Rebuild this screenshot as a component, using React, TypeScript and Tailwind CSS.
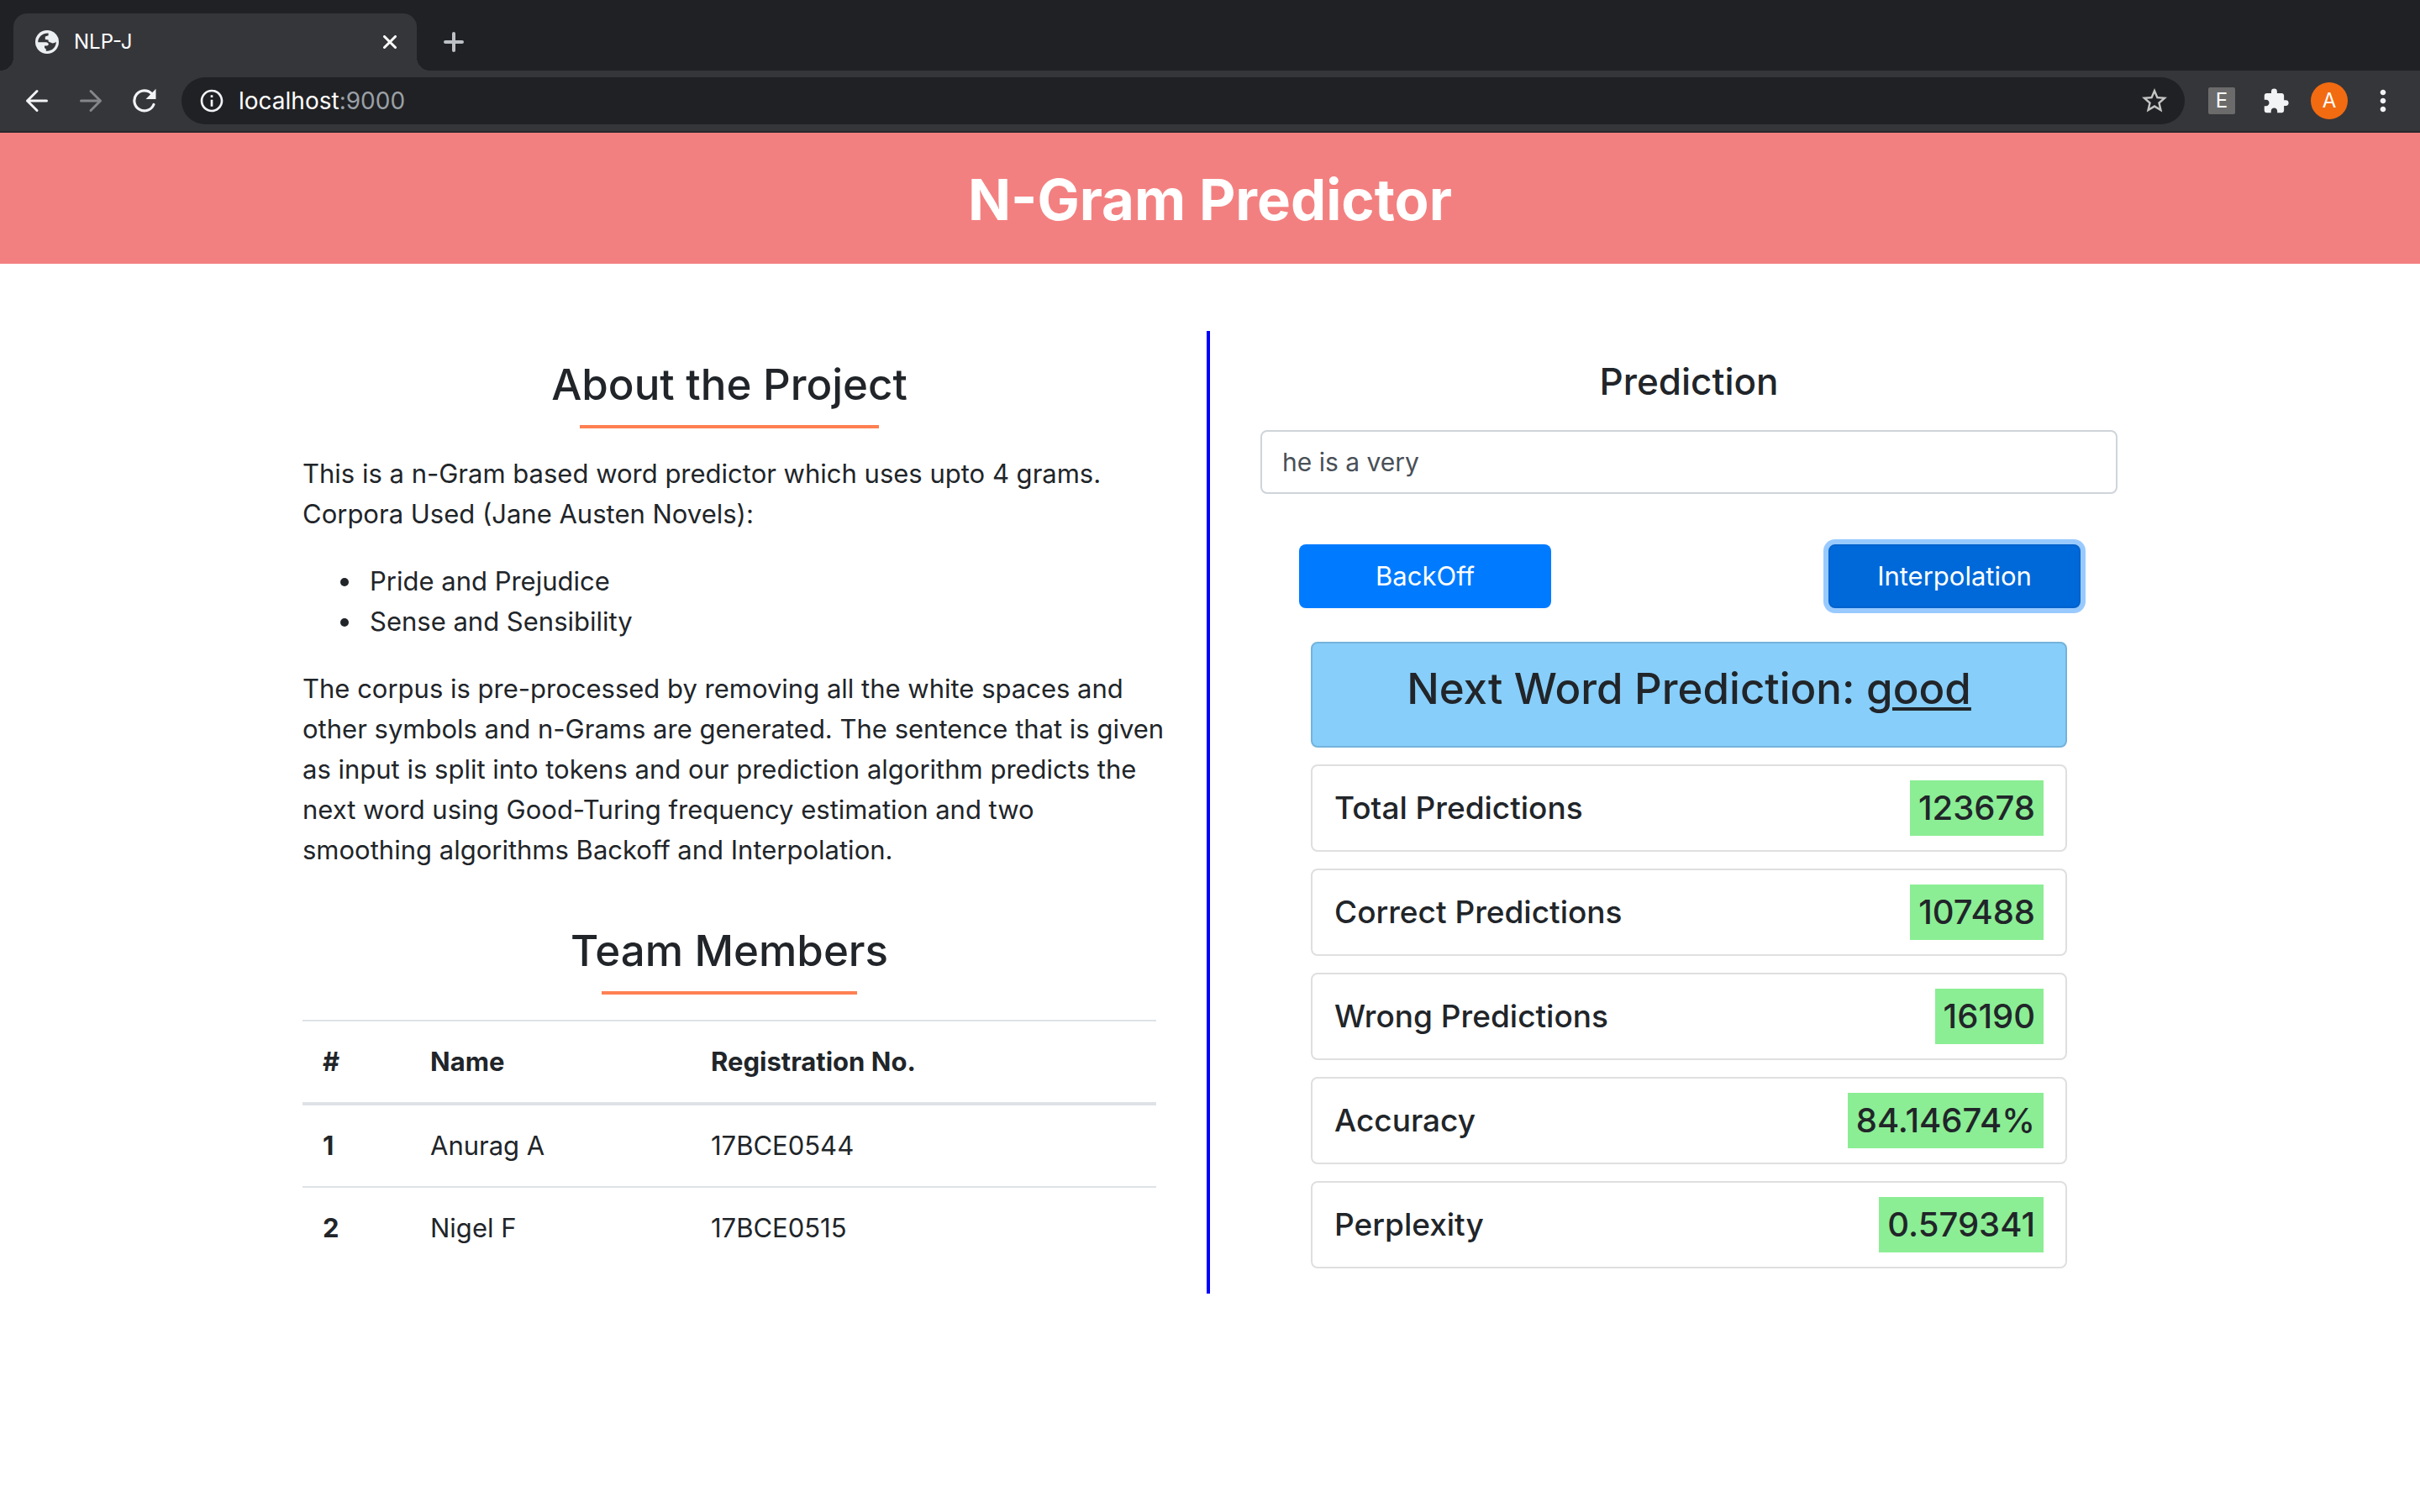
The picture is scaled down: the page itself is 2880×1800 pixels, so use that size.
import { MdExtension, MdInfoOutline, MdMoreVert, MdStarBorder } from 'react-icons/md';

function GlobeIcon() {
  return (
    <svg viewBox="0 0 28 28" className="size-7" aria-hidden="true">
      <circle cx="14" cy="14" r="14" fill="#eceff1" />
      <path
        d="M3.2 14.2C3.2 7.8 8.9 3.1 15.6 3.4V6.2L11.8 7.6V11L15.6 11.4V13.4L18.6 14.8C20.8 16 22.6 15.4 24.8 13.8C24.9 20.4 19.6 25.2 12.8 24.7V22.4L11 21V18.4H13.6C15 18.4 15.8 17.8 15.8 16.6C15.8 15.2 14.4 14.4 12.6 14.2Z"
        fill="#35363a"
      />
    </svg>
  );
}

function ArrowIcon({ flipped = false }: { flipped?: boolean }) {
  return (
    <svg
      viewBox="0 0 28 28"
      className="size-7"
      fill="none"
      stroke="currentColor"
      strokeWidth="3"
      strokeLinecap="round"
      strokeLinejoin="round"
      aria-hidden="true"
    >
      {flipped ? <path d="M2.5 14H25.5M14 2.5L25.5 14L14 25.5" /> : <path d="M25.5 14H2.5M14 2.5L2.5 14L14 25.5" />}
    </svg>
  );
}

function ReloadIcon() {
  return (
    <svg viewBox="0 0 28 30" className="h-[30px] w-7" aria-hidden="true">
      <path
        d="M24.9 19.5A12 12 0 1 1 22.6 6.6"
        fill="none"
        stroke="currentColor"
        strokeWidth="3.2"
        strokeLinecap="round"
      />
      <path d="M27.5 0.8V13H15.5Z" fill="currentColor" />
    </svg>
  );
}

function BrowserChrome() {
  return (
    <div className="border-b-2 border-[#27282c] bg-[#35363a] text-white">
      <div className="flex h-21 items-end bg-[#202124]">
        <div className="relative ml-4 flex h-17 w-[480px] items-center rounded-t-2xl bg-[#35363a] pl-[26px]">
          <span className="absolute bottom-0 -left-4 size-4 bg-[radial-gradient(circle_at_top_left,#202124_16px,#35363a_16px)]" />
          <span className="absolute -right-4 bottom-0 size-4 bg-[radial-gradient(circle_at_top_right,#202124_16px,#35363a_16px)]" />
          <GlobeIcon />
          <span className="ml-[18px] text-2xl">NLP-J</span>
          <button type="button" aria-label="Close tab" className="mr-6 ml-auto">
            <svg viewBox="0 0 16 16" className="size-4" fill="none" stroke="currentColor" strokeWidth="3" strokeLinecap="round">
              <path d="M1.5 1.5L14.5 14.5M14.5 1.5L1.5 14.5" />
            </svg>
          </button>
        </div>
        <button type="button" aria-label="New tab" className="mb-[22px] ml-8 text-[#bdc1c6]">
          <svg viewBox="0 0 24 24" className="size-6" fill="none" stroke="currentColor" strokeWidth="4" strokeLinecap="round">
            <path d="M12 2V22M2 12H22" />
          </svg>
        </button>
      </div>
      <div className="flex h-18 items-center pr-6 pl-[30px]">
        <button type="button" aria-label="Back" className="text-[#f1f3f4]">
          <ArrowIcon />
        </button>
        <button type="button" aria-label="Forward" className="ml-9 text-[#85868a]">
          <ArrowIcon flipped />
        </button>
        <button type="button" aria-label="Reload" className="ml-9 text-[#f1f3f4]">
          <ReloadIcon />
        </button>
        <div className="ml-[30px] flex h-14 grow items-center rounded-full bg-[#202124] pr-[18px] pl-5">
          <MdInfoOutline className="size-8 text-[#f1f3f4]" />
          <a href="#top" className="ml-4 text-[28px] text-[#9aa0a6]">
            <span className="text-white">localhost</span>:9000
          </a>
          <button type="button" aria-label="Bookmark this page" className="ml-auto text-[#c4c4c4]">
            <MdStarBorder className="size-9" />
          </button>
        </div>
        <button
          type="button"
          aria-label="Extension E"
          className="ml-7 flex size-8 items-center justify-center rounded-[2px] bg-[#6b6b6b] text-2xl"
        >
          E
        </button>
        <button type="button" aria-label="Extensions" className="ml-8 text-[#f1f3f4]">
          <MdExtension className="size-[33px]" />
        </button>
        <button
          type="button"
          aria-label="Profile"
          className="ml-[25px] flex size-11 items-center justify-center rounded-full bg-[#f26b11] text-2xl"
        >
          A
        </button>
        <button type="button" aria-label="Menu" className="ml-[22px] text-[#f1f3f4]">
          <MdMoreVert className="size-10" />
        </button>
      </div>
    </div>
  );
}

function SectionTitle({ text, ruleWidth }: { text: string; ruleWidth: string }) {
  return (
    <>
      <h2 className="mb-3.5 text-center text-[51px] leading-[68px] font-medium">{text}</h2>
      <hr className={`mx-auto mb-[30px] border-t-4 border-[#ff8052] ${ruleWidth}`} />
    </>
  );
}

const members = [
  { id: 1, name: 'Anurag A', registration: '17BCE0544' },
  { id: 2, name: 'Nigel F', registration: '17BCE0515' },
];

const stats = [
  { label: 'Total Predictions', value: '123678' },
  { label: 'Correct Predictions', value: '107488' },
  { label: 'Wrong Predictions', value: '16190' },
  { label: 'Accuracy', value: '84.14674%' },
  { label: 'Perplexity', value: '0.579341' },
];

function About() {
  return (
    <section className="border-r-4 border-[#0000ff] px-15 py-[30px]">
      <SectionTitle text="About the Project" ruleWidth="w-[35%]" />
      <p className="mb-8">
        This is a n-Gram based word predictor which uses upto 4 grams.
        <br />
        Corpora Used (Jane Austen Novels):
      </p>
      <ul className="mb-8 list-disc pl-18">
        <li className="pl-2">Pride and Prejudice</li>
        <li className="pl-2">Sense and Sensibility</li>
      </ul>
      <p className="-mr-4 mb-[62px]">
        The corpus is pre-processed by removing all the white spaces and other symbols and n-Grams are generated. The
        sentence that is given as input is split into tokens and our prediction algorithm predicts the next word using
        Good-Turing frequency estimation and two smoothing algorithms Backoff and Interpolation.
      </p>
      <SectionTitle text="Team Members" ruleWidth="w-[30%]" />
      <table className="w-full table-fixed text-left">
        <thead>
          <tr className="border-t-2 border-b-4 border-[#dee2e6]">
            <th className="w-32 p-6 font-bold">#</th>
            <th className="w-[334px] p-6 font-bold">Name</th>
            <th className="p-6 font-bold">Registration No.</th>
          </tr>
        </thead>
        <tbody>
          {members.map((member) => (
            <tr key={member.id} className="border-b-2 border-[#dee2e6] last:border-b-0">
              <th scope="row" className="p-6 font-bold">
                {member.id}
              </th>
              <td className="p-6">{member.name}</td>
              <td className="p-6">{member.registration}</td>
            </tr>
          ))}
        </tbody>
      </table>
    </section>
  );
}

function Prediction() {
  return (
    <section className="px-15 py-[30px]">
      <h3 className="mb-7 text-center text-[44px] leading-[60px] font-medium">
        <label htmlFor="sentence">Prediction</label>
      </h3>
      <input
        id="sentence"
        type="text"
        defaultValue="he is a very"
        className="h-19 w-full rounded-lg border-2 border-[#ced4da] bg-white px-6 text-[30px] text-[#495057]"
      />
      <div className="mt-15 flex justify-between pr-11 pl-[46px]">
        <button type="button" className="h-19 w-[300px] rounded-lg bg-[#007bff] text-[31px] text-white">
          BackOff
        </button>
        <button
          type="button"
          className="h-19 w-[300px] rounded-lg border-2 border-[#0062cc] bg-[#0069d9] text-[31px] text-white ring-6 ring-[#99caff]"
        >
          Interpolation
        </button>
      </div>
      <div className="mt-10 flex flex-col gap-5 px-15">
        <div className="h-[126px] rounded-lg border-2 border-[#74b3dc] bg-[#87cefa] pt-5 text-center text-[51px] leading-[68px] font-medium">
          Next Word Prediction: <span className="underline decoration-4 underline-offset-4">good</span>
        </div>
        {stats.map((stat) => (
          <div
            key={stat.label}
            className="flex h-26 items-center justify-between rounded-lg border-2 border-[#dfdfdf] px-[26px] font-medium"
          >
            <span className="text-[37px]">{stat.label}</span>
            <span className="bg-[#8bee94] px-2.5 text-[40px] leading-[66px]">{stat.value}</span>
          </div>
        ))}
      </div>
    </section>
  );
}

export default function App() {
  return (
    <div id="top" className="min-h-screen bg-white font-['Inter',sans-serif] text-[#212529]">
      <BrowserChrome />
      <header className="flex h-[156px] items-center justify-center bg-[#f38080] pt-1">
        <h1 className="text-[67px] font-bold text-white">N-Gram Predictor</h1>
      </header>
      <main className="mx-auto mt-20 grid max-w-[2280px] grid-cols-2 text-[31px] leading-[48px]">
        <About />
        <Prediction />
      </main>
    </div>
  );
}
